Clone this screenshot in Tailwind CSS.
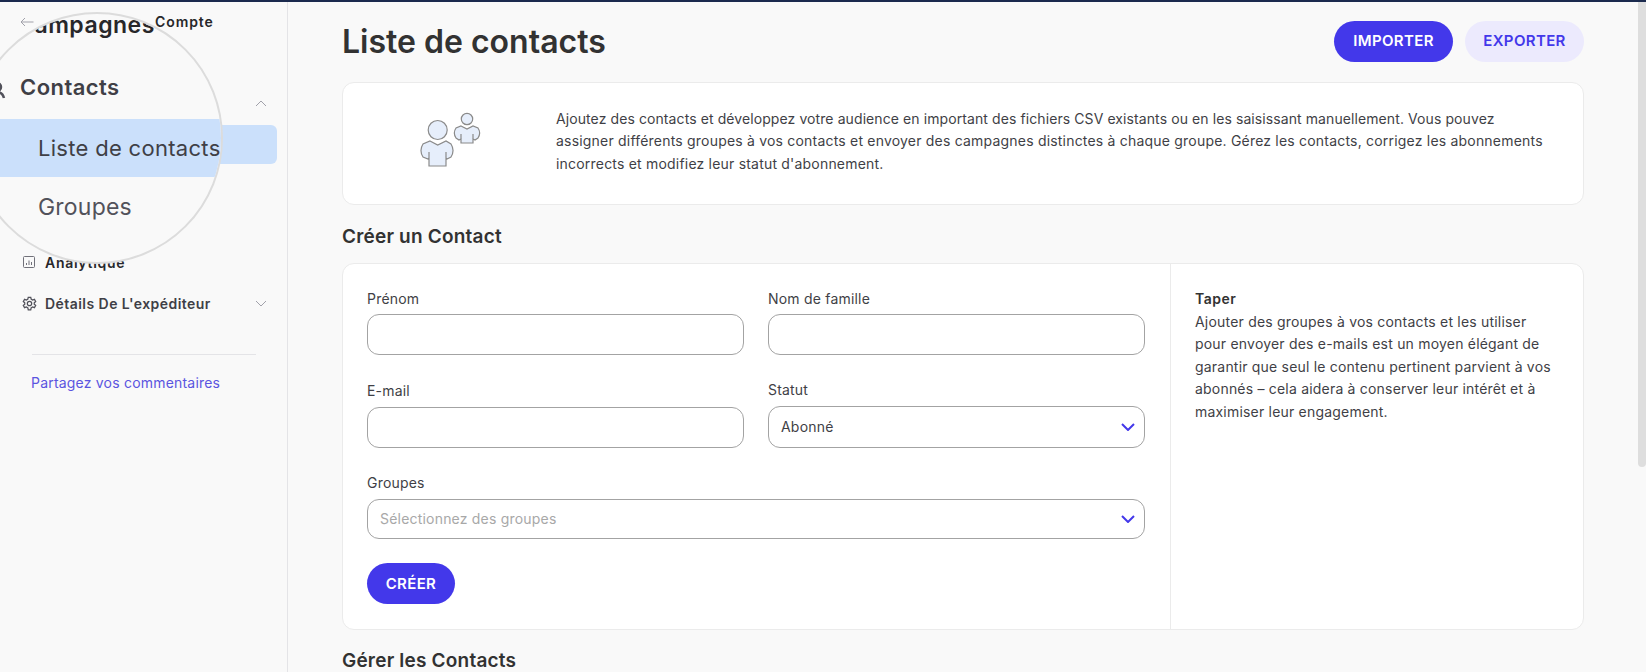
<!DOCTYPE html>
<html lang="fr">
<head>
  <meta charset="UTF-8" />
  <title>Liste de contacts</title>
  <script src="https://cdn.jsdelivr.net/npm/@tailwindcss/browser@4"></script>
</head>
<body class="h-[672px] w-[1646px] overflow-hidden bg-[#f9f9f9] font-['Inter',sans-serif] text-[14px] tracking-[0.2px] text-[#3f3f46]">
  <div class="h-[2px] bg-[#1b2a4e]"></div>
  <div class="flex h-[670px]">
    <!-- sidebar -->
    <aside class="relative w-[288px] shrink-0 overflow-hidden border-r border-[#e4e4e7]">
      <div class="flex h-[38px] items-center gap-[121px] pl-[20px] pt-[1px]">
        <svg class="h-[10px] w-[14px] text-[#a1a1aa]" viewBox="0 0 14 10" fill="none" stroke="currentColor"><path d="M13.500 5H1M5 1 1 5l4 4"/></svg>
        <span class="text-[14px] font-semibold tracking-[0.9px] text-[#27272a]">Compte</span>
      </div>
      <div class="h-[60px]"></div>
      <div class="flex h-[14px] justify-end pr-[20px]">
        <svg class="h-[7px] w-[12px] text-[#a1a1aa]" viewBox="0 0 12 7" fill="none" stroke="currentColor"><path d="M1 6l5-5 5 5"/></svg>
      </div>
      <div class="mr-[10px] mt-[11px] h-[39px] rounded-r-[6px] bg-[#cbe0fb]"></div>
      <div class="h-[86px]"></div>
      <div class="flex h-[24px] items-center gap-[9px] pl-[22px]">
        <svg class="h-[14px] w-[14px] text-[#71717a]" viewBox="0 0 14 14" fill="none" stroke="currentColor"><rect x="1.500" y="1.500" width="11" height="11" rx="1"/><path d="M4.500 10V8M7 10V5.500M9.500 10V7"/></svg>
        <span class="text-[14px] font-semibold tracking-[0.7px] text-[#27272a]">Analytique</span>
      </div>
      <div class="mt-[17px] flex h-[24px] items-center pl-[22px] pr-[20px]">
        <svg class="h-[15px] w-[15px] text-[#52525b]" viewBox="0 0 24 24" fill="none" stroke="currentColor" stroke-width="2"><path d="M10 2h4l.6 3 2.400 1.400 2.900-1 2 3.400-2.300 2v2.400l2.300 2-2 3.400-2.900-1-2.400 1.400-.6 3h-4l-.6-3L7 17.600l-2.900 1-2-3.400 2.300-2v-2.400l-2.300-2 2-3.400 2.900 1L9.400 5z"/><circle cx="12" cy="12" r="3.500"/></svg>
        <span class="ml-[8px] flex-1 text-[14px] font-semibold tracking-[0.45px] text-[#3f3f46]">Détails De L'expéditeur</span>
        <svg class="h-[7px] w-[12px] text-[#a1a1aa]" viewBox="0 0 12 7" fill="none" stroke="currentColor"><path d="M1 1l5 5 5-5"/></svg>
      </div>
      <div class="ml-[32px] mr-[31px] mt-[39px] h-px bg-[#e4e4e7]"></div>
      <a class="ml-[31px] mt-[18px] block leading-[20px] text-[#5b55e0]">Partagez vos commentaires</a>

      <!-- magnifier lens -->
      <div class="absolute left-[-29px] top-[10px] h-[252px] w-[252px] overflow-hidden rounded-full border-2 border-[#dcdcdc] bg-[#f9f9f9]">
        <div class="absolute left-[44px] top-[-3px] text-[23px] font-semibold leading-[28px] tracking-[0.5px] text-[#27272a]">Campagnes</div>
        <svg class="absolute left-[15px] top-[67px] h-[20px] w-[20px] text-[#52525b]" viewBox="0 0 20 20" fill="none" stroke="currentColor" stroke-width="2.500"><circle cx="9" cy="6" r="4"/><path d="M2 17c1-4 4-6 7-6s6 2 7 6"/></svg>
        <div class="absolute left-[47px] top-[59px] text-[22px] font-semibold leading-[28px] tracking-[0.45px] text-[#3f3f46]">Contacts</div>
        <div class="absolute left-0 top-[105px] flex h-[58px] w-full items-center bg-[#cbe0fb] pl-[65px] text-[22px] tracking-[0.3px] text-[#3f3f46]"><span class="whitespace-nowrap">Liste de contacts</span></div>
        <div class="absolute left-[65px] top-[179px] text-[23px] leading-[28px] text-[#52525b]">Groupes</div>
      </div>
    </aside>

    <!-- main -->
    <main class="w-[1350px] pl-[54px]">
      <div class="flex h-[80px] w-[1242px] items-center justify-between pb-[2px]">
        <h1 class="mt-[2px] text-[32px] font-semibold tracking-normal text-[#323232]">Liste de contacts</h1>
        <div class="flex gap-[12px]">
          <button class="h-[41px] w-[119px] rounded-full bg-[#4338ea] pt-[1px] text-[15px] font-semibold tracking-[0.35px] text-white">IMPORTER</button>
          <button class="h-[41px] w-[119px] rounded-full bg-[#eceafd] pt-[1px] text-[15px] font-semibold tracking-[0.35px] text-[#4338ea]">EXPORTER</button>
        </div>
      </div>

      <section class="flex h-[123px] w-[1242px] items-center rounded-[12px] border border-[#ebebeb] bg-white">
        <div class="flex w-[213px] shrink-0 justify-center pb-[9px] pl-[3px]">
          <svg class="h-[58px] w-[62px]" viewBox="0 0 62 58" fill="#e6eefb" stroke="#8a8a8a" stroke-width="1.200">
            <circle cx="47" cy="9" r="5.700"/>
            <path d="M41 16l6 3 6-3 5 2c2 3 2 7 0 10l-3 2-2-1v4H41v-4l-2 1-3-2c-2-3-2-7 0-10zM41 24v5M53 24v5"/>
            <circle cx="17.700" cy="20" r="9.500"/>
            <path d="M10 31l7.700 4 8.300-4 5 3c2.500 4 2.500 9 0 13l-4 2-1-1v8H9v-8l-1 1-5-2c-2.500-4-2.500-9 0-13zM9 42v6M26 42v6"/>
          </svg>
        </div>
        <p class="w-[990px] pb-[4px] leading-[22.500px] first-line:tracking-[0.09px]">Ajoutez des contacts et développez votre audience en important des fichiers CSV existants ou en les saisissant manuellement. Vous pouvez assigner différents groupes à vos contacts et envoyer des campagnes distinctes à chaque groupe. Gérez les contacts, corrigez les abonnements incorrects et modifiez leur statut d'abonnement.</p>
      </section>

      <h2 class="mt-[21px] h-[37px] w-[1242px] text-[19px] font-semibold leading-[22px] text-[#323232]">Créer un Contact</h2>

      <section class="flex h-[367px] w-[1242px] rounded-[12px] border border-[#ebebeb] bg-white">
        <form class="w-[828px] border-r border-[#ebebeb] pl-[24px] pr-[25px] pt-[25px]">
          <div class="grid grid-cols-2 gap-x-[24px]">
            <label class="block leading-[20px]">Prénom
              <input class="mt-[5px] block h-[41px] w-full rounded-[12px] border border-[#a3a3a3] bg-white" />
            </label>
            <label class="block leading-[20px]">Nom de famille
              <input class="mt-[5px] block h-[41px] w-full rounded-[12px] border border-[#a3a3a3] bg-white" />
            </label>
            <label class="mt-[26px] block leading-[20px]">E-mail
              <input class="mt-[6px] block h-[41px] w-full rounded-[12px] border border-[#a3a3a3] bg-white" />
            </label>
            <div class="mt-[25px] leading-[20px]">Statut
              <div class="mt-[6px] flex h-[42px] items-center justify-between rounded-[12px] border border-[#a3a3a3] pl-[12px] pr-[9px]">
                <span>Abonné</span>
                <svg class="h-[8px] w-[14px] text-[#4338ea]" viewBox="0 0 14 8" fill="none" stroke="currentColor" stroke-width="2"><path d="M1 1l6 6 6-6"/></svg>
              </div>
            </div>
          </div>
          <div class="mt-[25px] leading-[20px]">Groupes
            <div class="mt-[6px] flex h-[40px] items-center justify-between rounded-[12px] border border-[#a3a3a3] pl-[12px] pr-[9px]">
              <span class="text-[#a8a8a8]">Sélectionnez des groupes</span>
              <svg class="h-[8px] w-[14px] text-[#4338ea]" viewBox="0 0 14 8" fill="none" stroke="currentColor" stroke-width="2"><path d="M1 1l6 6 6-6"/></svg>
            </div>
          </div>
          <button type="button" class="mt-[24px] h-[41px] w-[88px] rounded-full bg-[#4338ea] pt-[1px] text-[15px] font-semibold tracking-[0.35px] text-white">CRÉER</button>
        </form>
        <div class="flex-1 pl-[24px] pt-[24px] leading-[22.500px]">
          <div class="font-semibold tracking-[0.5px] text-[#323232]">Taper</div>
          <p class="w-[362px]">Ajouter des groupes à vos contacts et les utiliser pour envoyer des e-mails est un moyen élégant de garantir que seul le contenu pertinent parvient à vos abonnés – cela aidera à conserver leur intérêt et à maximiser leur engagement.</p>
        </div>
      </section>

      <h2 class="mt-[20px] text-[19px] font-semibold leading-[22px] text-[#323232]">Gérer les Contacts</h2>
    </main>

    <!-- scrollbar -->
    <div class="w-[8px]">
      <div class="h-[465px] rounded-b-[4px] bg-[#dedede]"></div>
    </div>
  </div>
</body>
</html>
